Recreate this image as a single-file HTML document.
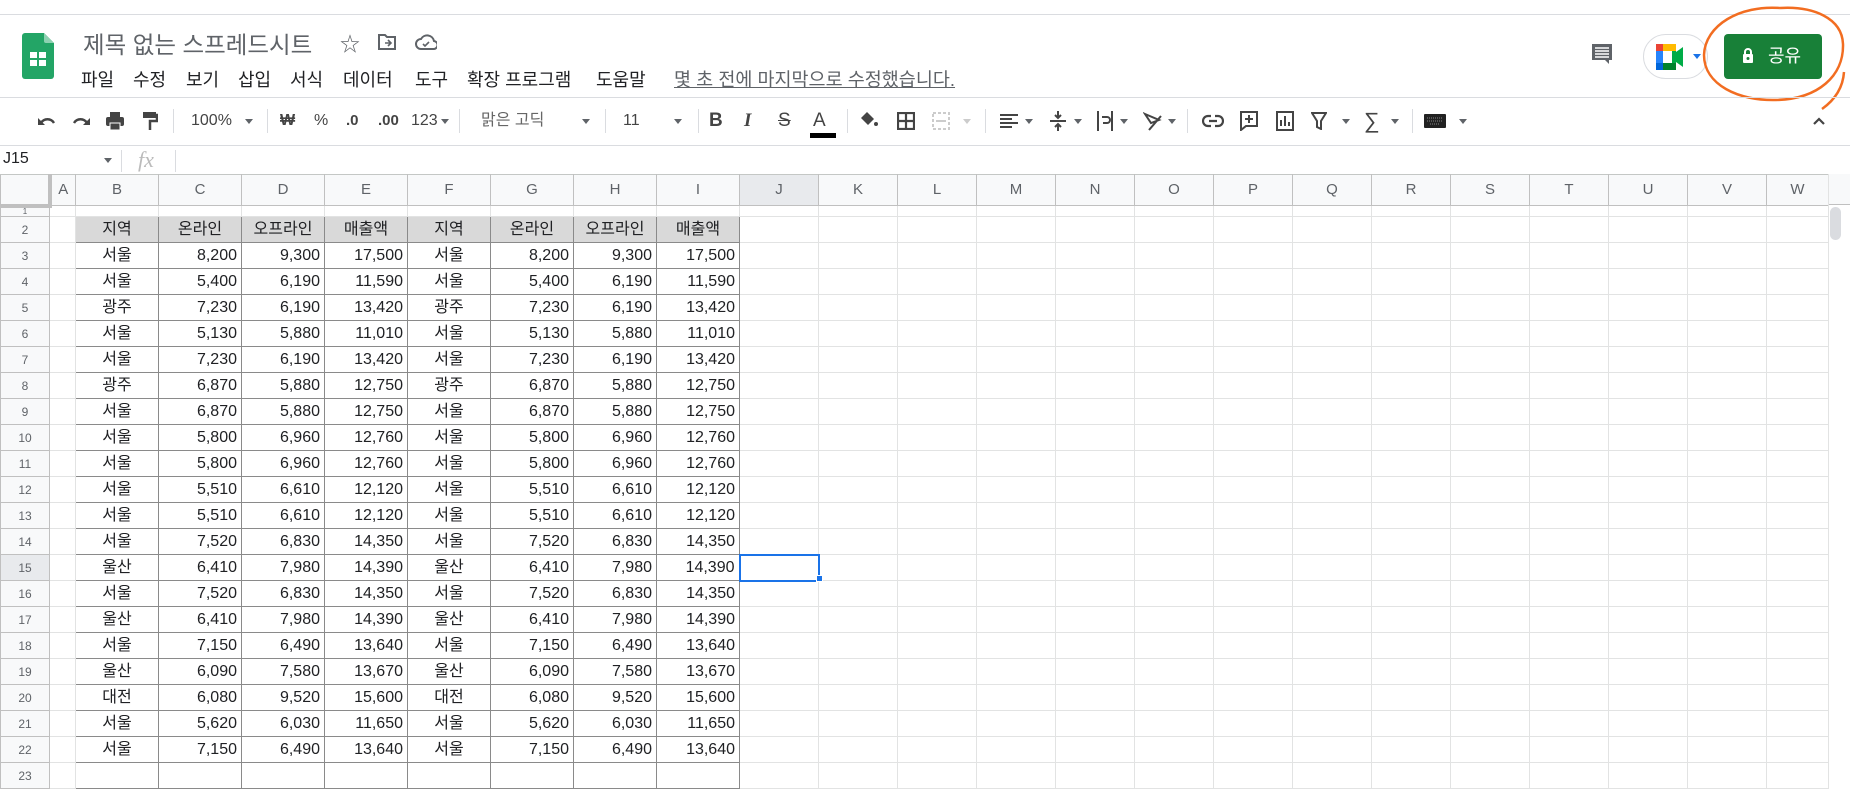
<!DOCTYPE html>
<html><head><meta charset="utf-8"><style>
*{box-sizing:border-box;margin:0;padding:0}
body{width:1850px;height:766px;overflow:hidden;background:#fff;font-family:"Liberation Sans","Noto Sans CJK KR",sans-serif;position:relative;color:#202124}
.a{position:absolute}
.top{left:0;top:14px;width:1850px;height:1px;background:#dadce0}
.menu span{position:absolute;top:66px;font-size:18px;color:#202124}
.tb{position:absolute;top:109px;height:24px;font-size:16px;color:#444;line-height:24px}
.sep{position:absolute;top:109px;width:1px;height:24px;background:#dadce0}
.dd{position:absolute;top:119px;width:0;height:0;border-left:4px solid transparent;border-right:4px solid transparent;border-top:5px solid #5f6368}
table{position:absolute;left:0;top:174px;border-collapse:collapse;table-layout:fixed;font-size:16px}
td{border:1px solid #e2e3e3;height:26px;padding:0 4px;white-space:nowrap;overflow:hidden;line-height:24px}
tr.h td{height:31px;background:#f8f9fa;border-color:#c0c0c0;color:#5f6368;text-align:center;font-size:15px;border-top:1px solid #c4c7c5}
tr.r1 td{height:11px;line-height:8px;font-size:8px}
td.rh{background:#f8f9fa;color:#5f6368;text-align:center;font-size:12px;border-color:#c0c0c0}
td.d{border:1px solid #8a8a8a;text-align:right;color:#202124}
td.k{border:1px solid #8a8a8a;text-align:center}
tr.hd td.k{background:#d9d9d9}
</style></head><body>
<div class="a top"></div>
<svg class="a" style="left:22px;top:33px" width="32" height="46" viewBox="0 0 32 46"><path d="M3 0h19l10 10v33a3 3 0 0 1-3 3H3a3 3 0 0 1-3-3V3a3 3 0 0 1 3-3z" fill="#23a566"/><path d="M22 0v8a2 2 0 0 0 2 2h8z" fill="#8ed1b1"/><rect x="8" y="19" width="16" height="14" fill="#fff"/><rect x="15" y="19" width="2" height="14" fill="#23a566"/><rect x="8" y="25" width="16" height="2" fill="#23a566"/></svg>
<div class="a" style="left:83px;top:26px;font-size:23.5px;color:#5f6368">제목 없는 스프레드시트</div>
<div class="a" style="left:340px;top:28px;font-size:20px;color:#5f6368">☆</div>
<svg class="a" style="left:377px;top:34px" width="20" height="16" viewBox="0 0 20 16"><path d="M2 1h6l2 2h8v12H2z" fill="none" stroke="#5f6368" stroke-width="2"/><path d="M8 9h6M11 6l3 3-3 3" fill="none" stroke="#5f6368" stroke-width="1.6"/></svg>
<svg class="a" style="left:415px;top:34px" width="22" height="16" viewBox="0 0 22 16"><path d="M6 15a5 5 0 0 1 0-10 7 7 0 0 1 13 2 4 4 0 0 1-1 8z" fill="none" stroke="#5f6368" stroke-width="2"/><path d="M8 10l2 2 4-4" fill="none" stroke="#5f6368" stroke-width="1.6"/></svg>
<div class="menu"><span style="left:81px">파일</span><span style="left:133px">수정</span><span style="left:186px">보기</span><span style="left:238px">삽입</span><span style="left:290px">서식</span><span style="left:343px">데이터</span><span style="left:415px">도구</span><span style="left:467px">확장 프로그램</span><span style="left:596px">도움말</span><span style="left:674px;color:#5f6368;text-decoration:underline;font-size:18.5px;top:66px">몇 초 전에 마지막으로 수정했습니다.</span></div>
<svg class="a" style="left:1590px;top:42px" width="24" height="24" viewBox="0 0 24 24"><path d="M2 2h20v16h-3v4l-4-4H2z" fill="#5f6368"/><path d="M5 6h14M5 9h14M5 12h14M5 15h14" stroke="#fff" stroke-width="1.4"/></svg>
<div class="a" style="left:1643px;top:34px;width:65px;height:45px;border:1px solid #dadce0;border-radius:23px"></div>
<svg class="a" style="left:1656px;top:44px" width="30" height="26" viewBox="0 0 30 26"><rect x="0" y="0" width="20" height="26" rx="3" fill="#00ac47"/><rect x="0" y="0" width="7" height="7" fill="#ea4335"/><rect x="7" y="0" width="13" height="7" fill="#ffba00"/><rect x="0" y="7" width="7" height="12" fill="#2684fc"/><rect x="0" y="19" width="7" height="7" fill="#0066da"/><rect x="7" y="19" width="13" height="7" fill="#00832d"/><rect x="7" y="7" width="9" height="12" fill="#fff"/><path d="M20 8l7-5v20l-7-5z" fill="#00ac47"/></svg>
<div class="a" style="left:1693px;top:54px;border-left:4px solid transparent;border-right:4px solid transparent;border-top:5px solid #1a73e8"></div>
<div class="a" style="left:1724px;top:34px;width:98px;height:45px;background:#188038;border-radius:4px;color:#fff;font-size:18px;line-height:45px;padding-left:44px">공유</div>
<svg class="a" style="left:1742px;top:47px" width="12" height="16" viewBox="0 0 12 16"><path d="M3 7V5a3 3 0 0 1 6 0v2" fill="none" stroke="#fff" stroke-width="2"/><rect x="1" y="7" width="10" height="9" rx="1" fill="#fff"/><circle cx="6" cy="11.5" r="1.5" fill="#188038"/></svg>
<svg class="a" style="left:1695px;top:0px" width="155" height="125" viewBox="0 0 155 125"><path d="M85 8C45 5 10 25 9 55c0 30 35 46 72 45 42-1 68-24 67-56C147 18 118 6 85 8" fill="none" stroke="#f26d21" stroke-width="2.5"/><path d="M149 72c-1 15-8 27-22 37" fill="none" stroke="#f26d21" stroke-width="2.5"/></svg>
<div class="a" style="left:0;top:97px;width:1850px;height:1px;background:#dadce0"></div>
<svg class="a" style="left:37px;top:113px" width="20" height="16" viewBox="0 0 20 16"><path d="M4 10c3-5 10-5 13 0" fill="none" stroke="#444" stroke-width="2.4"/><path d="M1 5v7h7z" fill="#444"/></svg>
<svg class="a" style="left:71px;top:113px" width="20" height="16" viewBox="0 0 20 16"><path d="M16 10c-3-5-10-5-13 0" fill="none" stroke="#444" stroke-width="2.4"/><path d="M19 5v7h-7z" fill="#444"/></svg>
<svg class="a" style="left:105px;top:111px" width="20" height="20" viewBox="0 0 20 20"><rect x="5" y="1" width="10" height="5" fill="#444"/><rect x="1" y="6" width="18" height="9" rx="2" fill="#444"/><rect x="5" y="12" width="10" height="7" fill="#444" stroke="#fff" stroke-width="1"/></svg>
<svg class="a" style="left:142px;top:111px" width="16" height="20" viewBox="0 0 16 20"><rect x="1" y="1" width="13" height="6" fill="#444"/><path d="M14 4h1v6H8v9" fill="none" stroke="#444" stroke-width="2.5"/></svg>
<div class="sep" style="left:173px"></div>
<div class="tb" style="left:191px">100%</div><div class="dd" style="left:245px"></div>
<div class="sep" style="left:267px"></div>
<div class="tb" style="left:280px;font-weight:bold">₩</div>
<div class="tb" style="left:314px">%</div>
<div class="tb" style="left:346px;font-weight:bold;font-size:15px">.0</div>
<div class="tb" style="left:378px;font-weight:bold;font-size:15px">.00</div>
<div class="tb" style="left:411px">123</div><div class="dd" style="left:441px"></div>
<div class="sep" style="left:459px"></div>
<div class="tb" style="left:481px;color:#666">맑은 고딕</div><div class="dd" style="left:582px"></div>
<div class="sep" style="left:605px"></div>
<div class="tb" style="left:623px">11</div><div class="dd" style="left:674px"></div>
<div class="sep" style="left:698px"></div>
<div class="tb" style="left:709px;font-weight:bold;font-size:19px">B</div>
<div class="tb" style="left:744px;font-style:italic;font-size:19px;font-family:'Liberation Serif',serif;font-weight:bold">I</div>
<div class="tb" style="left:778px;text-decoration:line-through;font-size:19px">S</div>
<div class="tb" style="left:813px;font-size:19px">A</div>
<div class="a" style="left:810px;top:133px;width:26px;height:5px;background:#000"></div>
<div class="sep" style="left:847px"></div>
<svg class="a" style="left:859px;top:111px" width="20" height="18" viewBox="0 0 20 18"><path d="M8 1l7 7-6 6-7-7z" fill="#444"/><circle cx="17" cy="13" r="2" fill="#444"/></svg>
<svg class="a" style="left:897px;top:112px" width="18" height="18" viewBox="0 0 18 18"><path d="M1 1h16v16H1zM9 1v16M1 9h16" fill="none" stroke="#444" stroke-width="2.2"/></svg>
<svg class="a" style="left:932px;top:112px" width="18" height="18" viewBox="0 0 18 18"><path d="M1 1h16v16H1z" fill="none" stroke="#ccc" stroke-width="2" stroke-dasharray="3 2"/><path d="M4 9h10" stroke="#ccc" stroke-width="2"/></svg>
<div class="dd" style="left:963px;border-top-color:#ccc"></div>
<div class="sep" style="left:985px"></div>
<svg class="a" style="left:1000px;top:113px" width="18" height="16" viewBox="0 0 18 16"><path d="M0 2h18M0 6h12M0 10h18M0 14h12" stroke="#444" stroke-width="2"/></svg><div class="dd" style="left:1025px"></div>
<svg class="a" style="left:1050px;top:110px" width="16" height="22" viewBox="0 0 16 22"><path d="M0 11h16M8 1v6M8 15v6" stroke="#444" stroke-width="2"/><path d="M5 5l3 3 3-3M5 17l3-3 3 3" fill="none" stroke="#444" stroke-width="2"/></svg><div class="dd" style="left:1074px"></div>
<svg class="a" style="left:1097px;top:111px" width="16" height="20" viewBox="0 0 16 20"><path d="M1 0v20M15 0v20M5 6h5a3 3 0 0 1 0 6H6" fill="none" stroke="#444" stroke-width="2"/></svg><div class="dd" style="left:1120px"></div>
<svg class="a" style="left:1143px;top:111px" width="20" height="20" viewBox="0 0 20 20"><path d="M2 3l14 6-8 3zM6 19L18 5" fill="none" stroke="#444" stroke-width="2"/></svg><div class="dd" style="left:1168px"></div>
<div class="sep" style="left:1187px"></div>
<svg class="a" style="left:1202px;top:114px" width="22" height="14" viewBox="0 0 22 14"><path d="M9 2H6a5 5 0 0 0 0 10h3M13 2h3a5 5 0 0 1 0 10h-3M7 7h8" fill="none" stroke="#444" stroke-width="2.2"/></svg>
<svg class="a" style="left:1240px;top:111px" width="18" height="20" viewBox="0 0 18 20"><path d="M1 1h16v14H6l-5 4z" fill="none" stroke="#444" stroke-width="2"/><path d="M9 4v8M5 8h8" stroke="#444" stroke-width="2"/></svg>
<svg class="a" style="left:1276px;top:111px" width="18" height="20" viewBox="0 0 18 20"><rect x="1" y="1" width="16" height="18" fill="none" stroke="#444" stroke-width="2"/><path d="M5 15V9M9 15V5M13 15v-4" stroke="#444" stroke-width="2"/></svg>
<svg class="a" style="left:1311px;top:112px" width="16" height="18" viewBox="0 0 16 18"><path d="M1 1h14l-5 8v8l-4-2V9z" fill="none" stroke="#444" stroke-width="2"/></svg><div class="dd" style="left:1342px"></div>
<div class="tb" style="left:1364px;font-size:22px">∑</div><div class="dd" style="left:1391px"></div>
<div class="sep" style="left:1412px"></div>
<svg class="a" style="left:1424px;top:114px" width="22" height="14" viewBox="0 0 22 14"><rect width="22" height="14" rx="1" fill="#222"/><path d="M3 4h16M3 7h16M6 10h10" stroke="#888" stroke-width="1" stroke-dasharray="1 1"/></svg><div class="dd" style="left:1459px"></div>
<svg class="a" style="left:1812px;top:116px" width="14" height="10" viewBox="0 0 14 10"><path d="M2 8l5-5 5 5" fill="none" stroke="#444" stroke-width="2.2"/></svg>
<div class="a" style="left:0;top:145px;width:1850px;height:1px;background:#dadce0"></div>
<div class="a" style="left:3px;top:150px;font-size:16px">J15</div>
<div class="a" style="left:104px;top:158px;border-left:4px solid transparent;border-right:4px solid transparent;border-top:5px solid #5f6368"></div>
<div class="a" style="left:121px;top:150px;width:1px;height:22px;background:#dadce0"></div>
<div class="a" style="left:138px;top:147px;font-size:22px;font-style:italic;color:#bbb;font-family:'Liberation Serif',serif">fx</div>
<div class="a" style="left:175px;top:150px;width:1px;height:22px;background:#dadce0"></div>
<table>
<colgroup><col style="width:49px"><col style="width:26px"><col style="width:83px"><col style="width:83px"><col style="width:83px"><col style="width:83px"><col style="width:83px"><col style="width:83px"><col style="width:83px"><col style="width:83px"><col style="width:79px"><col style="width:79px"><col style="width:79px"><col style="width:79px"><col style="width:79px"><col style="width:79px"><col style="width:79px"><col style="width:79px"><col style="width:79px"><col style="width:79px"><col style="width:79px"><col style="width:79px"><col style="width:79px"><col style="width:62px"></colgroup>
<tr class="h"><td style="border-right:4px solid #c0c0c0;border-bottom:4px solid #c0c0c0"></td><td>A</td><td>B</td><td>C</td><td>D</td><td>E</td><td>F</td><td>G</td><td>H</td><td>I</td><td style="background:#e8eaed">J</td><td>K</td><td>L</td><td>M</td><td>N</td><td>O</td><td>P</td><td>Q</td><td>R</td><td>S</td><td>T</td><td>U</td><td>V</td><td>W</td></tr>
<tr class="r1"><td class="rh" style="font-size:8px">1</td><td></td><td></td><td></td><td></td><td></td><td></td><td></td><td></td><td></td><td></td><td></td><td></td><td></td><td></td><td></td><td></td><td></td><td></td><td></td><td></td><td></td><td></td><td></td></tr>
<tr class="hd"><td class="rh">2</td><td></td><td class="k">지역</td><td class="k">온라인</td><td class="k">오프라인</td><td class="k">매출액</td><td class="k">지역</td><td class="k">온라인</td><td class="k">오프라인</td><td class="k">매출액</td><td></td><td></td><td></td><td></td><td></td><td></td><td></td><td></td><td></td><td></td><td></td><td></td><td></td><td></td></tr>
<tr><td class="rh">3</td><td></td><td class="k">서울</td><td class="d">8,200</td><td class="d">9,300</td><td class="d">17,500</td><td class="k">서울</td><td class="d">8,200</td><td class="d">9,300</td><td class="d">17,500</td><td></td><td></td><td></td><td></td><td></td><td></td><td></td><td></td><td></td><td></td><td></td><td></td><td></td><td></td></tr>
<tr><td class="rh">4</td><td></td><td class="k">서울</td><td class="d">5,400</td><td class="d">6,190</td><td class="d">11,590</td><td class="k">서울</td><td class="d">5,400</td><td class="d">6,190</td><td class="d">11,590</td><td></td><td></td><td></td><td></td><td></td><td></td><td></td><td></td><td></td><td></td><td></td><td></td><td></td><td></td></tr>
<tr><td class="rh">5</td><td></td><td class="k">광주</td><td class="d">7,230</td><td class="d">6,190</td><td class="d">13,420</td><td class="k">광주</td><td class="d">7,230</td><td class="d">6,190</td><td class="d">13,420</td><td></td><td></td><td></td><td></td><td></td><td></td><td></td><td></td><td></td><td></td><td></td><td></td><td></td><td></td></tr>
<tr><td class="rh">6</td><td></td><td class="k">서울</td><td class="d">5,130</td><td class="d">5,880</td><td class="d">11,010</td><td class="k">서울</td><td class="d">5,130</td><td class="d">5,880</td><td class="d">11,010</td><td></td><td></td><td></td><td></td><td></td><td></td><td></td><td></td><td></td><td></td><td></td><td></td><td></td><td></td></tr>
<tr><td class="rh">7</td><td></td><td class="k">서울</td><td class="d">7,230</td><td class="d">6,190</td><td class="d">13,420</td><td class="k">서울</td><td class="d">7,230</td><td class="d">6,190</td><td class="d">13,420</td><td></td><td></td><td></td><td></td><td></td><td></td><td></td><td></td><td></td><td></td><td></td><td></td><td></td><td></td></tr>
<tr><td class="rh">8</td><td></td><td class="k">광주</td><td class="d">6,870</td><td class="d">5,880</td><td class="d">12,750</td><td class="k">광주</td><td class="d">6,870</td><td class="d">5,880</td><td class="d">12,750</td><td></td><td></td><td></td><td></td><td></td><td></td><td></td><td></td><td></td><td></td><td></td><td></td><td></td><td></td></tr>
<tr><td class="rh">9</td><td></td><td class="k">서울</td><td class="d">6,870</td><td class="d">5,880</td><td class="d">12,750</td><td class="k">서울</td><td class="d">6,870</td><td class="d">5,880</td><td class="d">12,750</td><td></td><td></td><td></td><td></td><td></td><td></td><td></td><td></td><td></td><td></td><td></td><td></td><td></td><td></td></tr>
<tr><td class="rh">10</td><td></td><td class="k">서울</td><td class="d">5,800</td><td class="d">6,960</td><td class="d">12,760</td><td class="k">서울</td><td class="d">5,800</td><td class="d">6,960</td><td class="d">12,760</td><td></td><td></td><td></td><td></td><td></td><td></td><td></td><td></td><td></td><td></td><td></td><td></td><td></td><td></td></tr>
<tr><td class="rh">11</td><td></td><td class="k">서울</td><td class="d">5,800</td><td class="d">6,960</td><td class="d">12,760</td><td class="k">서울</td><td class="d">5,800</td><td class="d">6,960</td><td class="d">12,760</td><td></td><td></td><td></td><td></td><td></td><td></td><td></td><td></td><td></td><td></td><td></td><td></td><td></td><td></td></tr>
<tr><td class="rh">12</td><td></td><td class="k">서울</td><td class="d">5,510</td><td class="d">6,610</td><td class="d">12,120</td><td class="k">서울</td><td class="d">5,510</td><td class="d">6,610</td><td class="d">12,120</td><td></td><td></td><td></td><td></td><td></td><td></td><td></td><td></td><td></td><td></td><td></td><td></td><td></td><td></td></tr>
<tr><td class="rh">13</td><td></td><td class="k">서울</td><td class="d">5,510</td><td class="d">6,610</td><td class="d">12,120</td><td class="k">서울</td><td class="d">5,510</td><td class="d">6,610</td><td class="d">12,120</td><td></td><td></td><td></td><td></td><td></td><td></td><td></td><td></td><td></td><td></td><td></td><td></td><td></td><td></td></tr>
<tr><td class="rh">14</td><td></td><td class="k">서울</td><td class="d">7,520</td><td class="d">6,830</td><td class="d">14,350</td><td class="k">서울</td><td class="d">7,520</td><td class="d">6,830</td><td class="d">14,350</td><td></td><td></td><td></td><td></td><td></td><td></td><td></td><td></td><td></td><td></td><td></td><td></td><td></td><td></td></tr>
<tr><td class="rh" style="background:#e8eaed">15</td><td></td><td class="k">울산</td><td class="d">6,410</td><td class="d">7,980</td><td class="d">14,390</td><td class="k">울산</td><td class="d">6,410</td><td class="d">7,980</td><td class="d">14,390</td><td style="border:2px solid #1a73e8"></td><td></td><td></td><td></td><td></td><td></td><td></td><td></td><td></td><td></td><td></td><td></td><td></td><td></td></tr>
<tr><td class="rh">16</td><td></td><td class="k">서울</td><td class="d">7,520</td><td class="d">6,830</td><td class="d">14,350</td><td class="k">서울</td><td class="d">7,520</td><td class="d">6,830</td><td class="d">14,350</td><td></td><td></td><td></td><td></td><td></td><td></td><td></td><td></td><td></td><td></td><td></td><td></td><td></td><td></td></tr>
<tr><td class="rh">17</td><td></td><td class="k">울산</td><td class="d">6,410</td><td class="d">7,980</td><td class="d">14,390</td><td class="k">울산</td><td class="d">6,410</td><td class="d">7,980</td><td class="d">14,390</td><td></td><td></td><td></td><td></td><td></td><td></td><td></td><td></td><td></td><td></td><td></td><td></td><td></td><td></td></tr>
<tr><td class="rh">18</td><td></td><td class="k">서울</td><td class="d">7,150</td><td class="d">6,490</td><td class="d">13,640</td><td class="k">서울</td><td class="d">7,150</td><td class="d">6,490</td><td class="d">13,640</td><td></td><td></td><td></td><td></td><td></td><td></td><td></td><td></td><td></td><td></td><td></td><td></td><td></td><td></td></tr>
<tr><td class="rh">19</td><td></td><td class="k">울산</td><td class="d">6,090</td><td class="d">7,580</td><td class="d">13,670</td><td class="k">울산</td><td class="d">6,090</td><td class="d">7,580</td><td class="d">13,670</td><td></td><td></td><td></td><td></td><td></td><td></td><td></td><td></td><td></td><td></td><td></td><td></td><td></td><td></td></tr>
<tr><td class="rh">20</td><td></td><td class="k">대전</td><td class="d">6,080</td><td class="d">9,520</td><td class="d">15,600</td><td class="k">대전</td><td class="d">6,080</td><td class="d">9,520</td><td class="d">15,600</td><td></td><td></td><td></td><td></td><td></td><td></td><td></td><td></td><td></td><td></td><td></td><td></td><td></td><td></td></tr>
<tr><td class="rh">21</td><td></td><td class="k">서울</td><td class="d">5,620</td><td class="d">6,030</td><td class="d">11,650</td><td class="k">서울</td><td class="d">5,620</td><td class="d">6,030</td><td class="d">11,650</td><td></td><td></td><td></td><td></td><td></td><td></td><td></td><td></td><td></td><td></td><td></td><td></td><td></td><td></td></tr>
<tr><td class="rh">22</td><td></td><td class="k">서울</td><td class="d">7,150</td><td class="d">6,490</td><td class="d">13,640</td><td class="k">서울</td><td class="d">7,150</td><td class="d">6,490</td><td class="d">13,640</td><td></td><td></td><td></td><td></td><td></td><td></td><td></td><td></td><td></td><td></td><td></td><td></td><td></td><td></td></tr>
<tr><td class="rh">23</td><td></td><td class="k"></td><td class="d"></td><td class="d"></td><td class="d"></td><td class="k"></td><td class="d"></td><td class="d"></td><td class="d"></td><td></td><td></td><td></td><td></td><td></td><td></td><td></td><td></td><td></td><td></td><td></td><td></td><td></td><td></td></tr>
</table>
<div class="a" style="left:816px;top:575px;width:7px;height:7px;background:#1a73e8;border:1px solid #fff"></div>
<div class="a" style="left:1828px;top:174px;width:22px;height:592px;background:#fff;border-left:1px solid #e2e3e3"></div>
<div class="a" style="left:1829px;top:174px;width:21px;height:31px;background:#f8f9fa;border-bottom:1px solid #c0c0c0"></div>
<div class="a" style="left:1830px;top:207px;width:11px;height:33px;background:#dadce0;border-radius:6px"></div>
</body></html>
